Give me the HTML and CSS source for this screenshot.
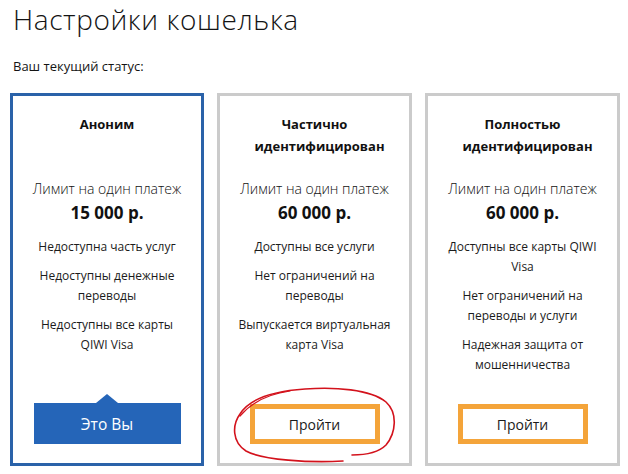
FILE: index.html
```html
<!DOCTYPE html>
<html lang="ru">
<head>
<meta charset="utf-8">
<title>Настройки кошелька</title>
<link rel="stylesheet" href="styles.css">
</head>
<body>
<div class="page">
  <h1 class="page-title">Настройки кошелька</h1>
  <p class="status">Ваш текущий статус:</p>
  <div class="cards">
    <div class="card card--current">
      <div class="card-title">Аноним</div>
      <div class="limit-label">Лимит на один платеж</div>
      <div class="limit-amount">15 000 р.</div>
      <ul class="features">
        <li>Недоступна часть услуг</li>
        <li>Недоступны денежные переводы</li>
        <li>Недоступны все карты QIWI Visa</li>
      </ul>
      <div class="card-action"><span class="btn btn--you">Это Вы</span></div>
    </div>
    <div class="card">
      <div class="card-title">Частично идентифицирован</div>
      <div class="limit-label">Лимит на один платеж</div>
      <div class="limit-amount">60 000 р.</div>
      <ul class="features">
        <li>Доступны все услуги</li>
        <li>Нет ограничений на переводы</li>
        <li>Выпускается виртуальная карта Visa</li>
      </ul>
      <div class="card-action"><span class="btn btn--go">Пройти</span></div>
    </div>
    <div class="card">
      <div class="card-title">Полностью идентифицирован</div>
      <div class="limit-label">Лимит на один платеж</div>
      <div class="limit-amount">60 000 р.</div>
      <ul class="features">
        <li>Доступны все карты QIWI Visa</li>
        <li>Нет ограничений на переводы и услуги</li>
        <li>Надежная защита от мошенничества</li>
      </ul>
      <div class="card-action"><span class="btn btn--go">Пройти</span></div>
    </div>
  </div>
  <svg class="annotation" width="628" height="474" viewBox="0 0 628 474" aria-hidden="true">
    <path d="M343 461 C 310 463, 262 460, 246 451 C 232 442, 232 425, 240 414 C 250 398, 275 391, 305 389 C 335 387, 370 389, 386 402 C 398 413, 396 433, 386 445 C 378 453, 365 455, 352 455" fill="none" stroke="#d3121c" stroke-width="1.6" stroke-linecap="round"/>
    <path d="M240 416 C 252 402, 268 394, 290 391" fill="none" stroke="#d3121c" stroke-width="1.2" stroke-linecap="round"/>
  </svg>
</div>
</body>
</html>
```

FILE: styles.css
```css
html, body {
  margin: 0;
  padding: 0;
  background: #ffffff;
}

body {
  font-family: "Open Sans", "Noto Sans", sans-serif;
  color: #1b1b1b;
}

.page {
  position: relative;
  width: 628px;
  height: 474px;
  overflow: hidden;
}

.page-title {
  margin: 0;
  padding-left: 13px;
  font-size: 28px;
  line-height: 38px;
  font-weight: 300;
  letter-spacing: 0.6px;
  color: #141414;
}

.status {
  margin: 19px 0 0 13px;
  font-size: 13px;
  line-height: 18px;
  color: #141414;
}

.cards {
  display: grid;
  grid-template-columns: 194px 195px 195px;
  gap: 13px;
  margin: 18px 0 0 10px;
  height: 373px;
}

.card {
  display: flex;
  flex-direction: column;
  align-items: center;
  border: 3px solid #cbcbcb;
  text-align: center;
  padding: 17px 6px 19px;
}

.card--current {
  border-color: #2a62a9;
}

.card-title {
  font-size: 13px;
  line-height: 22px;
  font-weight: 700;
  min-height: 44px;
  width: 120px;
  color: #111111;
}

.limit-label {
  margin-top: 22px;
  font-size: 14px;
  line-height: 20px;
  font-weight: 300;
  color: #111111;
}

.limit-amount {
  margin-top: 2px;
  font-size: 17px;
  line-height: 24px;
  font-weight: 700;
  color: #111111;
}

.features {
  list-style: none;
  margin: 12px 0 0;
  padding: 0;
  max-width: 162px;
  font-size: 12px;
  line-height: 20px;
  color: #1b1b1b;
}

.features li {
  margin-bottom: 9px;
}

.card-action {
  margin-top: auto;
}

.btn {
  display: flex;
  align-items: center;
  justify-content: center;
  box-sizing: border-box;
}

.btn--you {
  position: relative;
  width: 147px;
  height: 41px;
  background: #2565b8;
  color: #ffffff;
  font-size: 15.5px;
}

.btn--you::before {
  content: "";
  position: absolute;
  left: 50%;
  top: -9px;
  margin-left: -11px;
  border-left: 11px solid transparent;
  border-right: 11px solid transparent;
  border-bottom: 9px solid #2565b8;
}

.btn--go {
  width: 130px;
  height: 40px;
  border: 5px solid #f4a43a;
  background: #ffffff;
  color: #1b1b1b;
  font-size: 14px;
}

.annotation {
  position: absolute;
  left: 0;
  top: 0;
  pointer-events: none;
}
```
